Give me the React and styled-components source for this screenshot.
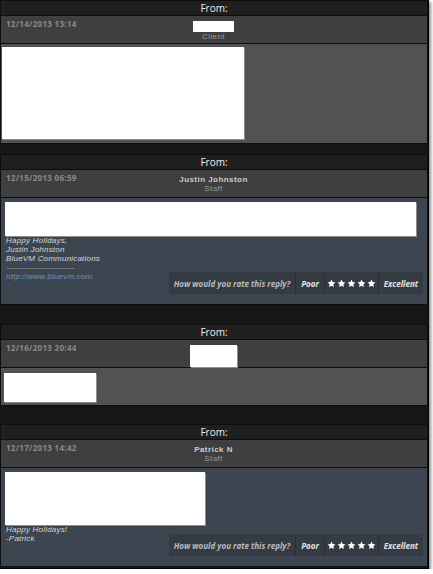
import React from 'react';
import styled, { createGlobalStyle } from 'styled-components';

const Global = createGlobalStyle`
  html, body { margin: 0; padding: 0; background: #ffffff; }
  body { font-family: "Open Sans", "DejaVu Sans", sans-serif; }
`;

const Frame = styled.div`
  width: 428px;
  height: 568px;
  background: #161616;
  border-right: 1px solid #050505;
  border-bottom: 1px solid #050505;
  box-shadow: 2px 2px 3px rgba(0, 0, 0, 0.45);
  overflow: hidden;
  display: flex;
  flex-direction: column;
`;

const Card = styled.section`
  margin-top: ${(p) => p.$gap}px;
  border: 1px solid #0e0e0e;
  display: flex;
  flex-direction: column;
`;

const CardHeader = styled.div`
  height: 14px;
  line-height: 14px;
  text-align: center;
  background: #1f1f1f;
  color: #efefef;
  font-size: 10px;
  border-bottom: 1px solid #0e0e0e;
`;

const InfoRow = styled.div`
  height: 24px;
  padding: 3px 6px 0 5px;
  background: #3f3f3f;
  border-bottom: 1px solid #0e0e0e;
  display: grid;
  grid-template-columns: 1fr auto 1fr;
  align-items: start;
`;

const Stamp = styled.div`
  font-size: 8px;
  line-height: 10px;
  font-weight: 700;
  letter-spacing: 0.3px;
  color: #8a8a8a;
`;

const Author = styled.div`
  padding-top: 2px;
  display: flex;
  flex-direction: column;
  align-items: center;
  font-family: "Liberation Sans", Arial, sans-serif;
`;

const AuthorName = styled.div`
  font-size: 8px;
  line-height: 9px;
  font-weight: 700;
  letter-spacing: 0.45px;
  color: #cdcdcd;
`;

const AuthorRole = styled.div`
  font-size: 8px;
  line-height: 9px;
  letter-spacing: 0.4px;
  color: #9a9a9a;
`;

const Blank = styled.div`
  width: ${(p) => p.$w}px;
  height: ${(p) => p.$h}px;
  background: #ffffff;
  box-shadow: ${(p) => (p.$edge ? '1px 1px 0 #8e8e8e' : 'none')};
`;

const ClientBody = styled.div`
  background: #525252;
  padding: ${(p) => p.$pad};
`;

const StaffBody = styled.div`
  background: #3d4650;
  padding: 4px 4px 10px 4px;
  display: flex;
  flex-direction: column;
`;

const SigLine = styled.div`
  padding-left: 1px;
  font-family: "Liberation Sans", Arial, sans-serif;
  font-size: 8px;
  line-height: 9px;
  font-style: italic;
  letter-spacing: 0.2px;
  color: #d2d6da;
  white-space: pre;
`;

const Rule = styled(SigLine)`
  color: #a0a6ac;
  letter-spacing: -0.4px;
`;

const Link = styled.a`
  padding-left: 1px;
  font-family: "Liberation Sans", Arial, sans-serif;
  font-size: 8px;
  line-height: 9px;
  font-style: italic;
  letter-spacing: 0.2px;
  color: #6f93b8;
  text-decoration: none;
`;

const Footer = styled.div`
  display: flex;
  justify-content: space-between;
  align-items: flex-start;
`;

const Rating = styled.div`
  height: 22px;
  background: #343b42;
  display: flex;
  align-items: stretch;
  font-size: 8px;
  font-weight: 700;
  font-style: italic;
  letter-spacing: 0px;
`;

const Segment = styled.div`
  display: flex;
  align-items: center;
  gap: 1px;
  padding: 0 ${(p) => p.$px ?? 5}px;
  color: ${(p) => p.$color || '#e6e6e6'};
  & + & { border-left: 1px solid #2a2f35; }
`;

const Star = () => (
  <svg width="9" height="9" viewBox="0 0 24 24" aria-hidden="true">
    <polygon
      fill="#ffffff"
      points="12,1.5 15.1,8.3 22.5,9.1 17,14.1 18.5,21.5 12,17.7 5.5,21.5 7,14.1 1.5,9.1 8.9,8.3"
    />
  </svg>
);

const RateBar = () => (
  <Rating>
    <Segment $color="#b7bcc1">How would you rate this reply?</Segment>
    <Segment>Poor</Segment>
    <Segment $px={2}>
      {[0, 1, 2, 3, 4].map((i) => (
        <Star key={i} />
      ))}
    </Segment>
    <Segment>Excellent</Segment>
  </Rating>
);

const Head = ({ stamp, children }) => (
  <>
    <CardHeader>From:</CardHeader>
    <InfoRow>
      <Stamp>{stamp}</Stamp>
      <Author>{children}</Author>
      <span />
    </InfoRow>
  </>
);

export default function App() {
  return (
    <>
      <Global />
      <Frame>
        <Card $gap={0}>
          <Head stamp="12/14/2013 13:14">
            <Blank $w={41} $h={11} />
            <AuthorRole>Client</AuthorRole>
          </Head>
          <ClientBody $pad="3px 1px 4px">
            <Blank $w={242} $h={92} $edge />
          </ClientBody>
        </Card>

        <Card $gap={10}>
          <Head stamp="12/15/2013 06:59">
            <AuthorName>Justin Johnston</AuthorName>
            <AuthorRole>Staff</AuthorRole>
          </Head>
          <StaffBody>
            <Blank $w={411} $h={34} $edge />
            <SigLine>Happy Holidays,</SigLine>
            <SigLine>Justin Johnston</SigLine>
            <SigLine>BlueVM Communications</SigLine>
            <Rule>------------------------------</Rule>
            <Footer>
              <Link href="#">http://www.bluevm.com</Link>
              <RateBar />
            </Footer>
          </StaffBody>
        </Card>

        <Card $gap={19}>
          <Head stamp="12/16/2013 20:44">
            <Blank $w={47} $h={22} $edge />
          </Head>
          <ClientBody $pad="5px 3px 3px">
            <Blank $w={92} $h={29} $edge />
          </ClientBody>
        </Card>

        <Card $gap={18}>
          <Head stamp="12/17/2013 14:42">
            <AuthorName>Patrick N</AuthorName>
            <AuthorRole>Staff</AuthorRole>
          </Head>
          <StaffBody>
            <Blank $w={200} $h={53} $edge />
            <SigLine>Happy Holidays!</SigLine>
            <Footer>
              <SigLine>-Patrick</SigLine>
              <RateBar />
            </Footer>
          </StaffBody>
        </Card>
      </Frame>
    </>
  );
}
